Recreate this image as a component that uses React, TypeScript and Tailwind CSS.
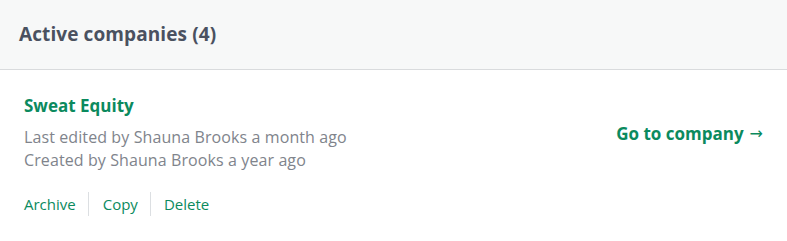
export default function App() {
  return (
    <div className="w-[787px] h-[241px] bg-white font-['Open_Sans',sans-serif]">
      <div className="h-[70px] bg-[#f7f8f8] border-b border-[#d9dbdd] flex items-center px-[19px]">
        <h2 className="text-[19px] tracking-[0.1px] font-bold text-[#4a5160]">Active companies (4)</h2>
      </div>
      <div className="flex items-start justify-between pl-6 pr-6 pt-[24px]">
        <div className="flex flex-col">
          <a className="text-[17px] font-bold text-[#0b8a5e] leading-[24px]">Sweat Equity</a>
          <div className="mt-[8px] text-[16px] tracking-[0.1px] leading-[23px] text-[#80848c]">
            <p>Last edited by Shauna Brooks a month ago</p>
            <p>Created by Shauna Brooks a year ago</p>
          </div>
          <div className="mt-[20px] flex items-center text-[15px] text-[#0b8a5e]">
            <a className="pr-3 leading-[24px]">Archive</a>
            <span className="h-[24px] w-px bg-[#dcdfe2]" />
            <a className="pl-[14px] pr-3 leading-[24px]">Copy</a>
            <span className="h-[24px] w-px bg-[#dcdfe2]" />
            <a className="pl-[13px] leading-[24px]">Delete</a>
          </div>
        </div>
        <a className="mt-[27px] flex items-center text-[17px] font-bold text-[#0b8a5e]">
          Go to company
          <span className="ml-[6px] font-['DejaVu_Sans',sans-serif] font-normal text-[16px]">→</span>
        </a>
      </div>
    </div>
  )
}
